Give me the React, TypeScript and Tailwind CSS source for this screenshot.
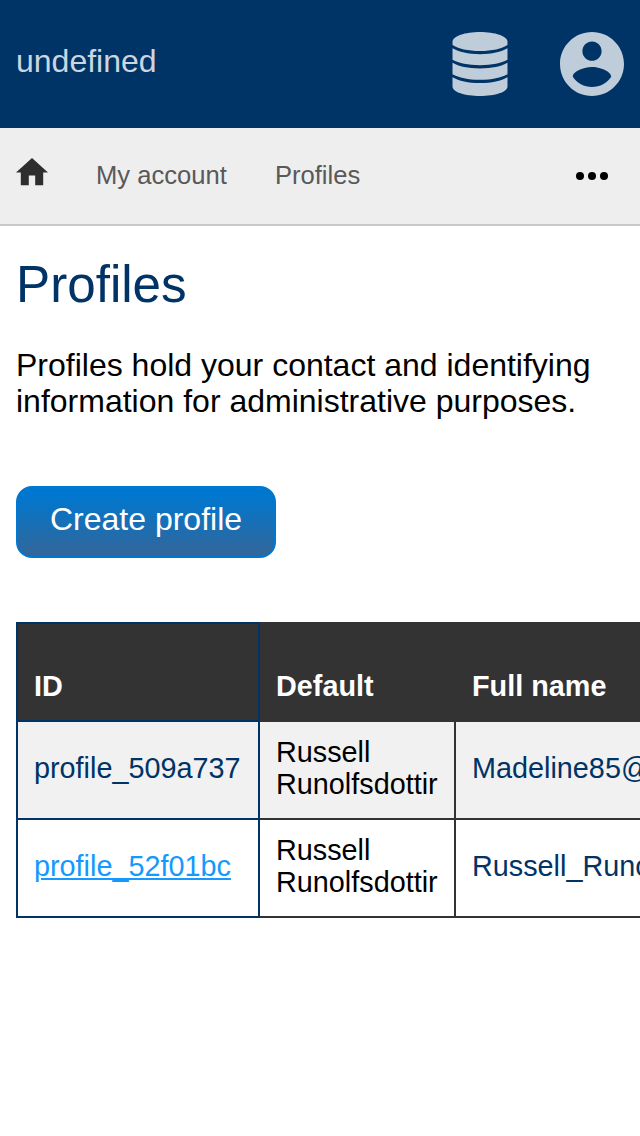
const HEADERS = ['ID', 'Default', 'Full name'];

const ROWS = [
  { id: 'profile_509a737', name: 'Madeline85@example.com', active: false },
  { id: 'profile_52f01bc', name: 'Russell_Runolfsdottir@example.com', active: true },
];

function DatabaseIcon() {
  return (
    <svg className="h-16 w-14" viewBox="0 0 56 64" fill="currentColor">
      <path d="M28 0C43 0 55.5 4.2 55.5 9.8V13C50 16.800 40 19 28 19S6 16.800 0.500 13V9.800C0.500 4.200 13 0 28 0Z" />
      <path d="M0.500 16.300C7 20 16 22.200 28 22.200S49 20 55.500 16.300V27.800C49 31.200 40 33.200 28 33.200S7 31.200 0.500 27.800Z" />
      <path d="M0.500 30.800C7 34.400 16 36.500 28 36.500S49 34.400 55.500 30.800V42.200C49 45.700 40 47.700 28 47.700S7 45.700 0.500 42.200Z" />
      <path d="M0.500 45.200C7 49 16 51 28 51S49 49 55.500 45.200V54.500C55.500 60 43 64 28 64S0.500 60 0.500 54.500Z" />
    </svg>
  );
}

function AccountIcon() {
  return (
    <svg className="size-16" viewBox="2 2 20 20" fill="currentColor">
      <path d="M12 2C6.48 2 2 6.48 2 12s4.48 10 10 10 10-4.48 10-10S17.52 2 12 2zm0 3c1.66 0 3 1.34 3 3s-1.34 3-3 3-3-1.34-3-3 1.34-3 3-3zm0 14.2c-2.5 0-4.71-1.28-6-3.22.03-1.99 4-3.08 6-3.08 1.99 0 5.97 1.09 6 3.08-1.29 1.94-3.5 3.22-6 3.22z" />
    </svg>
  );
}

function HomeIcon() {
  return (
    <svg className="-mt-2 h-[27.2px] w-8 fill-[#2e2e2e]" viewBox="2 3 20 17">
      <path d="M10 20v-6h4v6h5v-8h3L12 3 2 12h3v8z" />
    </svg>
  );
}

function MoreIcon() {
  return (
    <svg className="h-2 w-8" viewBox="0 0 32 8">
      <circle cx="4" cy="4" r="4" />
      <circle cx="16" cy="4" r="4" />
      <circle cx="28" cy="4" r="4" />
    </svg>
  );
}

export default function App() {
  return (
    <div className="min-h-[1136px] w-full overflow-hidden bg-white font-['Liberation_Sans',Arial,sans-serif] text-black">
      <header className="flex h-32 items-center justify-between bg-[#003366] px-4 text-[#bfccd9]">
        <span className="-mt-1.5 text-[32px] leading-9 text-[#ccd6e0]">undefined</span>
        <div className="flex gap-[52px]">
          <DatabaseIcon />
          <AccountIcon />
        </div>
      </header>

      <nav className="flex h-[98px] items-center border-b-2 border-[#c8c8c8] bg-[#eeeeee] pr-8 pl-4 text-[25.6px] leading-8 text-[#595959]">
        <HomeIcon />
        <a className="-mt-0.5 ml-12">My account</a>
        <a className="-mt-0.5 ml-12">Profiles</a>
        <button className="ml-auto text-black">
          <MoreIcon />
        </button>
      </nav>

      <main className="px-4 pt-[30px]">
        <h1 className="text-[51.2px] leading-[58px] text-[#003366]">Profiles</h1>
        <p className="mt-[33px] text-[32px] leading-9">
          Profiles hold your contact and identifying information for administrative purposes.
        </p>
        <button className="mt-[67px] flex h-[72px] w-[260px] items-center justify-center rounded-2xl border-2 border-[#0077d0] bg-[linear-gradient(to_bottom,#0077cf_10%,#336699)] pb-1.5 text-[32px] leading-9 text-white">
          Create profile
        </button>

        <table className="mt-16 w-[900px] table-fixed border-collapse text-left text-[28.8px] leading-8">
          <colgroup>
            <col className="w-[242px]" />
            <col className="w-[196px]" />
            <col />
          </colgroup>
          <thead>
            <tr className="h-[98px] bg-[#333333] text-white">
              {HEADERS.map((label, i) => (
                <th
                  key={label}
                  className={
                    i === 0
                      ? 'border-2 border-[#003366] px-4 pb-[18px] align-bottom font-bold'
                      : 'border-2 border-[#333333] px-4 pb-[18px] align-bottom font-bold'
                  }
                >
                  {label}
                </th>
              ))}
            </tr>
          </thead>
          <tbody>
            {ROWS.map((row) => (
              <tr key={row.id} className="h-[98px] odd:bg-[#f1f1f1]">
                <td className="border-2 border-[#003366] px-4 pb-1 text-[#003366]">
                  <a className={row.active ? 'text-[#1499ff] underline' : ''}>{row.id}</a>
                </td>
                <td className="border-2 border-[#333333] px-4 pb-1">Russell Runolfsdottir</td>
                <td className="border-2 border-[#333333] px-4 pb-1 text-[#003366]">{row.name}</td>
              </tr>
            ))}
          </tbody>
        </table>
      </main>
    </div>
  );
}
